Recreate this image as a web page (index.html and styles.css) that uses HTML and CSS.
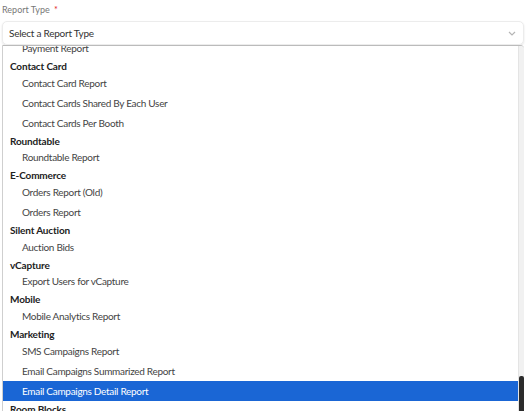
FILE: index.html
```html
<!DOCTYPE html>
<html lang="en">
  <head>
    <meta charset="UTF-8" />
    <meta name="viewport" content="width=device-width, initial-scale=1.0" />
    <title>Report Type</title>
    <link rel="stylesheet" href="styles.css">
  </head>
  <body>
    <div class="field">
      <label class="field-label">Report Type <span class="required">*</span></label>
      <div class="select">
        <span>Select a Report Type</span>
        <svg class="chevron" width="8" height="5" viewBox="0 0 8 5">
          <path d="M1 1l3 3 3-3" fill="none" stroke="#b5b5b5" stroke-width="1.2" />
        </svg>
      </div>
      <div class="menu">
        <div class="menu-list">
          <div class="option">Payment Report</div>
          <div class="group">Contact Card</div>
          <div class="option">Contact Card Report</div>
          <div class="option">Contact Cards Shared By Each User</div>
          <div class="option">Contact Cards Per Booth</div>
          <div class="group">Roundtable</div>
          <div class="option">Roundtable Report</div>
          <div class="group">E-Commerce</div>
          <div class="option">Orders Report (Old)</div>
          <div class="option">Orders Report</div>
          <div class="group">Silent Auction</div>
          <div class="option">Auction Bids</div>
          <div class="group">vCapture</div>
          <div class="option">Export Users for vCapture</div>
          <div class="group">Mobile</div>
          <div class="option">Mobile Analytics Report</div>
          <div class="group">Marketing</div>
          <div class="option">SMS Campaigns Report</div>
          <div class="option">Email Campaigns Summarized Report</div>
          <div class="option selected">Email Campaigns Detail Report</div>
          <div class="group">Room Blocks</div>
          <div class="option">Room Block Report</div>
        </div>
        <div class="scrollbar">
          <div class="thumb"></div>
        </div>
      </div>
    </div>
  </body>
</html>
```

FILE: styles.css
```css
html, body {
  margin: 0;
  height: 411px;
  overflow: hidden;
}
body {
  font-family: Lato, "Open Sans", sans-serif;
  background: #fff;
  color: #333;
}
.field {
  padding: 4px 4px 0 2px;
}
.field-label {
  display: block;
  font-size: 9px;
  color: #777;
  height: 13px;
  line-height: 12px;
}
.required {
  color: #e02424;
  margin-left: 2px;
}
.select {
  display: flex;
  align-items: center;
  justify-content: space-between;
  height: 22px;
  margin-top: 4px;
  padding: 0 7px 0 6px;
  border: 1px solid #ececec;
  border-radius: 5px;
  box-shadow: 0 1px 2px rgba(0, 0, 0, 0.12);
  font-size: 10px;
  letter-spacing: -0.25px;
  color: #333;
}
.menu {
  display: flex;
  height: 380px;
  border: 1px solid #cfcfcf;
  border-top-color: #bbb;
  border-right: none;
  border-radius: 0 4px 0 0;
  overflow: hidden;
  background: #fff;
}
.menu-list {
  flex: 1;
  margin-top: -8px;
}
.option {
  height: 20px;
  line-height: 20px;
  padding-left: 19px;
  font-size: 10px;
  letter-spacing: -0.3px;
  color: #444;
}
.option.selected {
  background: #1a66d5;
  color: #fff;
}
.group {
  height: 14.7px;
  line-height: 16px;
  padding-left: 7px;
  font-size: 10px;
  letter-spacing: -0.15px;
  font-weight: bold;
  color: #222;
}
.scrollbar {
  width: 5px;
  display: flex;
  flex-direction: column;
  justify-content: flex-end;
  background: #f1f1f1;
  border-left: 1px solid #e4e4e4;
}
.thumb {
  height: 58px;
  margin: 0 0 -8px 0;
  background: #2b2b2b;
  border-radius: 2px;
}
```
